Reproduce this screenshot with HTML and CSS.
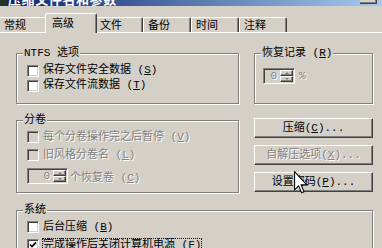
FILE: index.html
```html
<!DOCTYPE html>
<html lang="zh-CN">
<head>
<meta charset="utf-8">
<title>压缩文件名和参数</title>
<link rel="stylesheet" href="styles.css">
</head>
<body>
<div class="dialog">
  <div class="titlebar">
    <span class="app-icon"></span>
    <span class="title-text">压缩文件名和参数</span>
    <span class="title-btn"></span>
  </div>
  <div class="tabs">
    <div class="tab">常规</div>
    <div class="tab active">高级</div>
    <div class="tab">文件</div>
    <div class="tab">备份</div>
    <div class="tab">时间</div>
    <div class="tab">注释</div>
  </div>
  <div class="panel">
    <div class="group g-ntfs">
      <div class="group-title">NTFS 选项</div>
      <div class="rows rows-15">
        <div class="check"><span class="box"></span><span class="lbl">保存文件安全数据 (<u>S</u>)</span></div>
        <div class="check"><span class="box"></span><span class="lbl">保存文件流数据 (<u>T</u>)</span></div>
      </div>
    </div>
    <div class="group g-recovery">
      <div class="group-title">恢复记录 (<u>R</u>)</div>
      <div class="spin-row">
        <div class="spin spin-small">
          <span class="spin-val">0</span>
          <span class="updown"><span class="ud up"></span><span class="ud down"></span></span>
        </div>
        <span class="dis">%</span>
      </div>
    </div>
    <div class="group g-volume">
      <div class="group-title">分卷</div>
      <div class="rows rows-18">
        <div class="check"><span class="box off"></span><span class="lbl dis">每个分卷操作完之后暂停 (<u>V</u>)</span></div>
        <div class="check"><span class="box off"></span><span class="lbl dis">旧风格分卷名 (<u>L</u>)</span></div>
      </div>
      <div class="spin-row spin-row-vol">
        <div class="spin spin-wide">
          <span class="spin-val">0</span>
          <span class="updown"><span class="ud up"></span><span class="ud down"></span></span>
        </div>
        <span class="dis">个恢复卷 (<u>C</u>)</span>
      </div>
    </div>
    <div class="btn-col">
      <div class="btn">压缩(<u>C</u>)...</div>
      <div class="btn dis">自解压选项(<u>X</u>)...</div>
      <div class="btn">设置密码(<u>P</u>)...</div>
    </div>
    <div class="group g-system">
      <div class="group-title">系统</div>
      <div class="rows rows-18">
        <div class="check"><span class="box"></span><span class="lbl">后台压缩 (<u>B</u>)</span></div>
        <div class="check"><span class="box"><svg class="tick" width="8" height="8" viewBox="0 0 8 8"><polyline points="1,3.5 3,5.6 7,1.4" fill="none" stroke="#000" stroke-width="1.7"/></svg></span><span class="lbl focus">完成操作后关闭计算机电源 (<u>F</u>)</span></div>
      </div>
    </div>
  </div>
  <svg class="cursor" width="14" height="23" viewBox="0 0 12 19.5"><path d="M0.5,0.5 L0.5,16 L4,12.6 L6.5,18.6 L8.6,17.7 L6.1,11.8 L11,11.8 Z" fill="#fff" stroke="#000" stroke-width="0.9" stroke-linejoin="miter"/></svg>
</div>
</body>
</html>
```
FILE: styles.css
```css
html, body {
  margin: 0;
  padding: 0;
}
body {
  width: 382px;
  height: 248px;
  overflow: hidden;
  background: #d4d0c8;
  font-family: "Liberation Mono", "Noto Sans CJK SC", monospace;
  font-size: 11px;
  color: #000;
}
.dialog {
  position: relative;
  height: 100%;
}
u {
  text-decoration: underline;
}

/* title bar (mostly cropped away) */
.titlebar {
  display: flex;
  height: 18px;
  margin-top: -12px;
  padding-top: 3px;
  box-sizing: border-box;
  background: linear-gradient(to right, #0a246a 0%, #a6caf0 100%);
}
.app-icon {
  width: 7px;
  height: 12px;
  align-self: flex-end;
  background: #24322a;
}
.title-text {
  margin-left: 1px;
  font-family: "Noto Sans CJK SC", sans-serif;
  font-weight: bold;
  font-size: 13px;
  letter-spacing: 0.6px;
  line-height: 15px;
  color: #fff;
}
.title-btn {
  margin-left: auto;
  margin-right: 5px;
  margin-bottom: 2px;
  align-self: flex-end;
  width: 17px;
  height: 12px;
  box-sizing: border-box;
  background: #d4d0c8;
  border-right: 1px solid #404040;
  border-bottom: 1px solid #404040;
  box-shadow: inset -1px -1px #808080;
}

/* tabs */
.tabs {
  display: flex;
  align-items: flex-end;
  height: 26px;
  margin-left: -1px;
}
.tab {
  width: 48px;
  height: 15px;
  box-sizing: border-box;
  padding-left: 4px;
  line-height: 13px;
  font-family: "Noto Sans CJK SC", sans-serif;
  border-top: 1px solid #fff;
  border-left: 1px solid #fff;
  border-right: 1px solid #404040;
  box-shadow: inset -1px 0 #808080;
  border-radius: 2px 2px 0 0;
}
.tab.active {
  width: 52px;
  height: 20px;
  margin: 0 -2px -1px;
  padding-left: 6px;
  padding-top: 2px;
  position: relative;
  z-index: 1;
  background: #d4d0c8;
}

/* page panel */
.panel {
  border-top: 1px solid #fff;
  padding: 20px 0 0 16px;
  display: grid;
  grid-template-columns: 223px 119px;
  column-gap: 15px;
}

/* group boxes */
.group {
  border: 1px solid #808080;
  box-shadow: inset 1px 1px #fff, 1px 1px #fff;
  padding: 0 10px 10px;
}
.group-title {
  width: fit-content;
  margin: -7px 0 0 -4px;
  padding: 0 1px;
  line-height: 12px;
  background: #d4d0c8;
}
.g-ntfs .rows {
  margin-top: 4px;
}
.g-recovery {
  padding-left: 8px;
}
.g-recovery .group-title {
  margin-left: -2px;
}
.g-recovery .spin-row {
  margin-top: 9px;
}
.g-volume {
  margin-top: 16px;
  padding-bottom: 8px;
}
.g-volume .rows {
  margin-top: 2px;
}
.g-system {
  grid-column: 1 / -1;
  margin-top: 17px;
}
.g-system .rows {
  margin-top: 2px;
}

/* checkboxes */
.check {
  display: flex;
  align-items: center;
}
.rows-15 .check {
  height: 15px;
}
.rows-18 .check {
  height: 18px;
}
.box {
  flex: none;
  width: 12px;
  height: 12px;
  box-sizing: border-box;
  margin-right: 4px;
  border: 1px solid;
  border-color: #808080 #fff #fff #808080;
  box-shadow: inset 1px 1px #404040, inset -1px -1px #d4d0c8;
  background: #fff;
  display: flex;
  align-items: center;
  justify-content: center;
}
.box.off {
  background: #d4d0c8;
}
.tick {
  display: block;
}
.lbl {
  line-height: 13px;
  white-space: nowrap;
}
.focus {
  line-height: 12px;
  outline: 1px dotted #000;
}
.dis {
  color: #808080;
  text-shadow: 1px 1px 0 #fff;
}

/* spin edits */
.spin-row {
  display: flex;
  align-items: center;
  gap: 4px;
  white-space: nowrap;
}
.spin-row-vol {
  margin-top: 4px;
  gap: 2px;
}
.spin {
  display: flex;
  height: 16px;
  box-sizing: border-box;
  padding: 1px;
  border: 1px solid;
  border-color: #808080 #fff #fff #808080;
  box-shadow: inset 1px 1px #404040, inset -1px -1px #d4d0c8;
}
.spin-small {
  width: 32px;
}
.spin-wide {
  width: 41px;
}
.spin-val {
  flex: 1;
  text-align: right;
  padding-right: 3px;
  line-height: 12px;
  color: #808080;
  text-shadow: 1px 1px 0 #fff;
}
.updown {
  width: 13px;
  display: flex;
  flex-direction: column;
}
.ud {
  flex: 1;
  box-sizing: border-box;
  border: 1px solid;
  border-color: #fff #404040 #404040 #fff;
  box-shadow: inset -1px -1px #808080;
  display: flex;
  align-items: center;
  justify-content: center;
}
.ud::after {
  content: "";
  width: 0;
  height: 0;
  border-left: 2px solid transparent;
  border-right: 2px solid transparent;
}
.ud.up::after {
  border-bottom: 2px solid #808080;
}
.ud.down::after {
  border-top: 2px solid #808080;
}

/* push buttons */
.btn-col {
  margin-top: 14px;
  display: flex;
  flex-direction: column;
  gap: 7px;
}
.btn {
  height: 20px;
  box-sizing: border-box;
  border: 1px solid;
  border-color: #fff #404040 #404040 #fff;
  box-shadow: inset -1px -1px #808080;
  display: flex;
  align-items: center;
  justify-content: center;
  line-height: 13px;
  white-space: nowrap;
}

/* mouse pointer over the dialog */
.cursor {
  position: absolute;
  left: 294px;
  top: 183px;
}
```
